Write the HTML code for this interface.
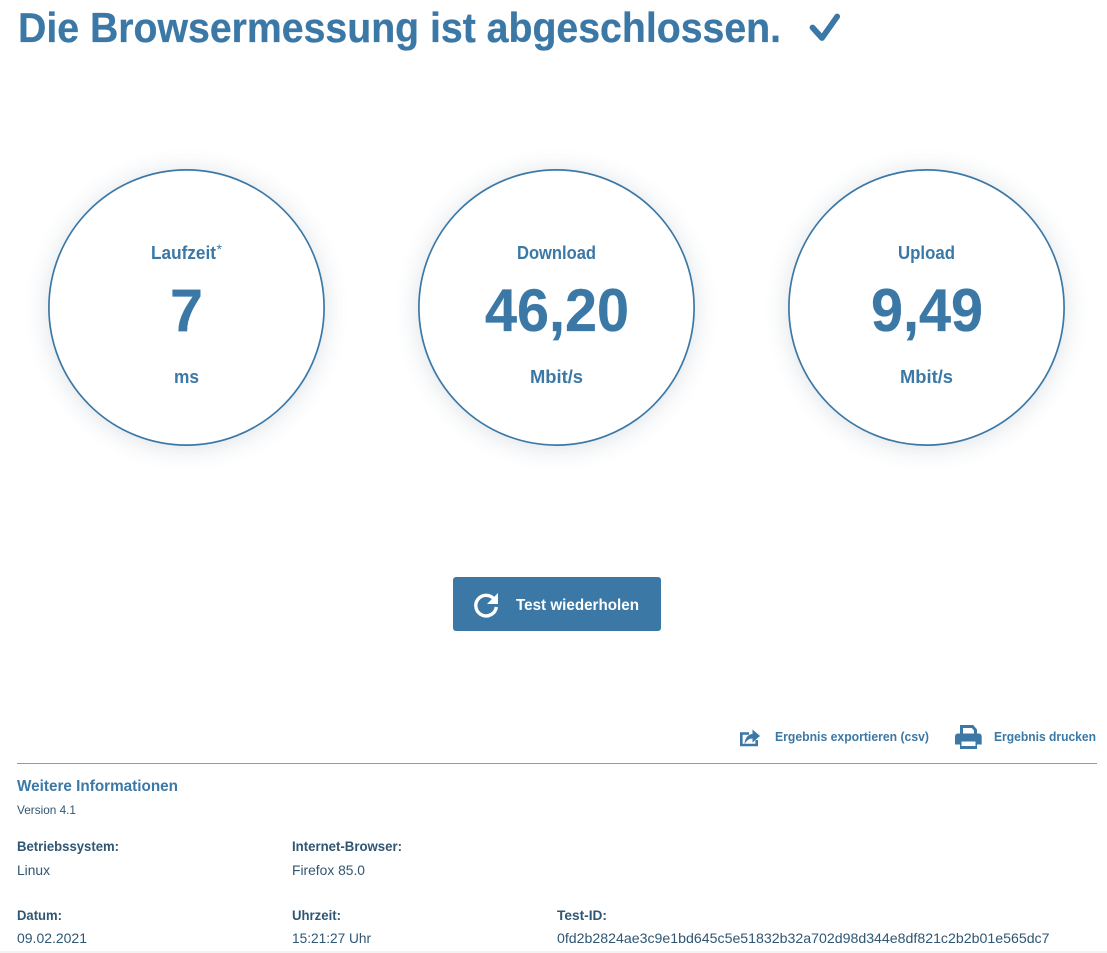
<!DOCTYPE html>
<html lang="de"><head><meta charset="utf-8"><title>Browsermessung</title>
<style>
html,body{margin:0;padding:0;background:#fff;width:1107px;height:953px;overflow:hidden}
svg{display:block;position:absolute;left:0;top:0}
text{font-family:"Liberation Sans",sans-serif}
.b{font-weight:700}
.c{fill:#3b78a6}
.d{fill:#2f5673}
.h{stroke:#3b78a6;stroke-width:.3px}
.circle{position:absolute;left:48px;top:169px;width:277px;height:277px;border-radius:50%;box-shadow:0 2px 24px rgba(40,70,100,.16);background:#fff}
</style></head><body>
<div class="circle"></div>
<div class="circle" style="left:418px"></div>
<div class="circle" style="left:788px"></div>
<svg width="1107" height="953" viewBox="0 0 1107 953">
<rect y="951" width="1107" height="2" fill="#f3f3f3"/>
<g fill="none" stroke="#3b78a6" stroke-width="1.700">
<circle cx="186.500" cy="307.500" r="137.600"/>
<circle cx="556.500" cy="307.500" r="137.600"/>
<circle cx="926.500" cy="307.500" r="137.600"/>
</g>
<text class="b c h" x="18" y="42" font-size="42" textLength="763" lengthAdjust="spacingAndGlyphs">Die Browsermessung ist abgeschlossen.</text>
<path d="M812.500 27.500L822 38L837.200 16.500" fill="none" stroke="#3b78a6" stroke-width="5.800" stroke-linecap="round" stroke-linejoin="round"/>

<text class="b c" x="151" y="259" font-size="18" textLength="65" lengthAdjust="spacingAndGlyphs">Laufzeit</text>
<text class="c" x="216.500" y="254" font-size="14">*</text>
<text class="b c h" x="170" y="331" font-size="60" textLength="33" lengthAdjust="spacingAndGlyphs">7</text>
<text class="b c" x="174" y="383" font-size="18" textLength="25" lengthAdjust="spacingAndGlyphs">ms</text>

<text class="b c" x="517" y="259" font-size="18" textLength="79" lengthAdjust="spacingAndGlyphs">Download</text>
<text class="b c h" x="485" y="331" font-size="60" textLength="144" lengthAdjust="spacingAndGlyphs">46,20</text>
<text class="b c" x="530" y="383" font-size="18" textLength="53" lengthAdjust="spacingAndGlyphs">Mbit/s</text>

<text class="b c" x="898" y="259" font-size="18" textLength="57" lengthAdjust="spacingAndGlyphs">Upload</text>
<text class="b c h" x="871" y="331" font-size="60" textLength="112" lengthAdjust="spacingAndGlyphs">9,49</text>
<text class="b c" x="900" y="383" font-size="18" textLength="53" lengthAdjust="spacingAndGlyphs">Mbit/s</text>

<rect x="453" y="577" width="208" height="54" rx="3" fill="#3b78a6"/>
<path d="M494 599A10.300 10.300 0 1 0 496.300 607" fill="none" stroke="#fff" stroke-width="3.400"/>
<path d="M498 593V604H487Z" fill="#fff"/>
<text class="b" x="516" y="610" font-size="15.500" fill="#fff" textLength="123" lengthAdjust="spacingAndGlyphs">Test wiederholen</text>

<path d="M749 733.500H741.300V745H756.700V740" fill="none" stroke="#3b78a6" stroke-width="2.600"/>
<path d="M744.500 744C745 737 749 734 752.500 734V729.500L760 736L752.500 742.500V738.500C749.500 738.500 747 740 744.500 744Z" fill="#3b78a6"/>
<text class="b c" x="775" y="741" font-size="12.500" textLength="154" lengthAdjust="spacingAndGlyphs">Ergebnis exportieren (csv)</text>

<path d="M961.500 735V726.500H972.500L975.500 730V735" fill="none" stroke="#3b78a6" stroke-width="3"/>
<path d="M958 733.500H979Q981.700 733.500 981.700 737V744.500H977V749H960V744.500H955V737Q955 733.500 958 733.500Z" fill="#3b78a6"/>
<rect x="961.500" y="741.500" width="14" height="4.500" fill="#fff"/>
<text class="b c" x="994" y="741" font-size="12.500" textLength="102" lengthAdjust="spacingAndGlyphs">Ergebnis drucken</text>

<rect x="17" y="763" width="1080" height="1" fill="#999"/>
<text class="b c" x="17" y="791" font-size="16" textLength="161" lengthAdjust="spacingAndGlyphs">Weitere Informationen</text>
<text class="d" x="17" y="814" font-size="12" textLength="59" lengthAdjust="spacingAndGlyphs">Version 4.1</text>

<text class="b d" x="17" y="851" font-size="14" textLength="102" lengthAdjust="spacingAndGlyphs">Betriebssystem:</text>
<text class="d" x="17" y="875" font-size="14" textLength="33" lengthAdjust="spacingAndGlyphs">Linux</text>
<text class="b d" x="292" y="851" font-size="14" textLength="110" lengthAdjust="spacingAndGlyphs">Internet-Browser:</text>
<text class="d" x="292" y="875" font-size="14" textLength="73" lengthAdjust="spacingAndGlyphs">Firefox 85.0</text>

<text class="b d" x="17" y="920" font-size="14" textLength="45" lengthAdjust="spacingAndGlyphs">Datum:</text>
<text class="d" x="17" y="943" font-size="14" textLength="70" lengthAdjust="spacingAndGlyphs">09.02.2021</text>
<text class="b d" x="292" y="920" font-size="14" textLength="49" lengthAdjust="spacingAndGlyphs">Uhrzeit:</text>
<text class="d" x="292" y="943" font-size="14" textLength="79" lengthAdjust="spacingAndGlyphs">15:21:27 Uhr</text>
<text class="b d" x="557" y="920" font-size="14" textLength="50" lengthAdjust="spacingAndGlyphs">Test-ID:</text>
<text class="d" x="557" y="943" font-size="14" textLength="492.500" lengthAdjust="spacingAndGlyphs">0fd2b2824ae3c9e1bd645c5e51832b32a702d98d344e8df821c2b2b01e565dc7</text>
</svg>
</body></html>
